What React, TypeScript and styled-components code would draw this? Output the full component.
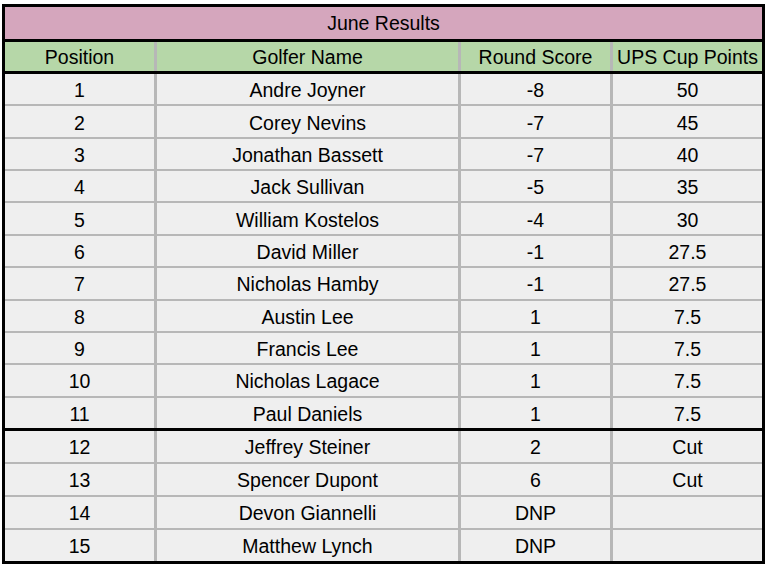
import styled, { createGlobalStyle } from "styled-components";

const GlobalStyle = createGlobalStyle`
  body {
    margin: 0;
    background: #ffffff;
    font-family: "Liberation Sans", Arial, sans-serif;
  }
`;

const Sheet = styled.div`
  width: 757px;
  margin: 4px 0 0 2px;
  border: 3px solid #000;
  background: #b7b7b7;
  font-size: 19.5px;
  color: #000;
`;

const Title = styled.div`
  height: 31px;
  padding-top: 1px;
  display: flex;
  align-items: center;
  justify-content: center;
  background: #d5a6bd;
  border-bottom: 3px solid #000;
`;

const Row = styled.div<{ $h: number; $line: "gray" | "black" | "none" }>`
  display: grid;
  grid-template-columns: 149px 301px 149px 149px;
  column-gap: 3px;
  height: ${(p) => p.$h}px;
  border-bottom: ${(p) =>
    p.$line === "black"
      ? "3px solid #000"
      : p.$line === "gray"
      ? "2px solid #b7b7b7"
      : "none"};
`;

const Cell = styled.div<{ $head?: boolean }>`
  display: flex;
  align-items: center;
  justify-content: center;
  box-sizing: border-box;
  padding-top: ${(p) => (p.$head ? "1px" : "3px")};
  white-space: nowrap;
  overflow: hidden;
  background: ${(p) => (p.$head ? "#b6d7a8" : "#efefef")};
`;

type Result = [number, string, string, string];

const results: Result[] = [
  [1, "Andre Joyner", "-8", "50"],
  [2, "Corey Nevins", "-7", "45"],
  [3, "Jonathan Bassett", "-7", "40"],
  [4, "Jack Sullivan", "-5", "35"],
  [5, "William Kostelos", "-4", "30"],
  [6, "David Miller", "-1", "27.5"],
  [7, "Nicholas Hamby", "-1", "27.5"],
  [8, "Austin Lee", "1", "7.5"],
  [9, "Francis Lee", "1", "7.5"],
  [10, "Nicholas Lagace", "1", "7.5"],
  [11, "Paul Daniels", "1", "7.5"],
  [12, "Jeffrey Steiner", "2", "Cut"],
  [13, "Spencer Dupont", "6", "Cut"],
  [14, "Devon Giannelli", "DNP", ""],
  [15, "Matthew Lynch", "DNP", ""],
];

export default function App() {
  return (
    <>
      <GlobalStyle />
      <Sheet>
        <Title>June Results</Title>
        <Row $h={29} $line="black">
          <Cell $head>Position</Cell>
          <Cell $head>Golfer Name</Cell>
          <Cell $head>Round Score</Cell>
          <Cell $head>UPS Cup Points</Cell>
        </Row>
        {results.map(([pos, name, score, points]) => (
          <Row
            key={pos}
            $h={pos <= 11 ? 30.36 : 31}
            $line={pos === 11 ? "black" : pos === 15 ? "none" : "gray"}
          >
            <Cell>{pos}</Cell>
            <Cell>{name}</Cell>
            <Cell>{score}</Cell>
            <Cell>{points}</Cell>
          </Row>
        ))}
      </Sheet>
    </>
  );
}
